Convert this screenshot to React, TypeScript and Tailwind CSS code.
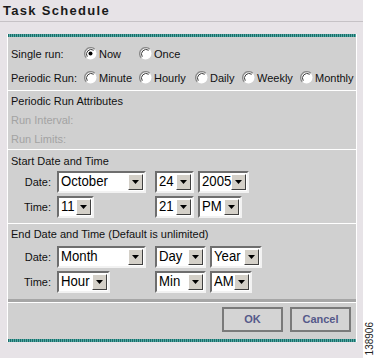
import React from "react";

function Radio({ checked, label, w }: { checked?: boolean; label: string; w?: string }) {
  return (
    <div className={`flex items-center ${w ?? ""}`}>
      <svg width="13" height="13" viewBox="0 0 13 13" className="shrink-0 -mt-[2px]">
        <circle cx="6.5" cy="6.5" r="6" fill="#fff" />
        <path d="M2.26 10.74 A6 6 0 0 1 10.74 2.26" stroke="#8a8a8a" strokeWidth="1.4" fill="none" />
        <path d="M3.3 9.7 A4.6 4.6 0 0 1 9.7 3.3" stroke="#3c3c3c" strokeWidth="1" fill="none" />
        {checked && <circle cx="6.5" cy="6.5" r="2" fill="#000" />}
      </svg>
      <span className="ml-[2px]">{label}</span>
    </div>
  );
}

function Select({ text, w }: { text: string; w: string }) {
  return (
    <div
      className={`${w} h-[22px] bg-white border-2 border-t-[#6e6e6e] border-l-[#6e6e6e] border-b-[#f2f2f2] border-r-[#f2f2f2] flex items-center`}
    >
      <div className="flex-1 min-w-0 pl-[2px] whitespace-nowrap">
        <span className="inline-block origin-left scale-x-[0.85] text-[15.5px] leading-none text-black">{text}</span>
      </div>
      <div className="shrink-0 w-[15px] h-[16px] mr-[1px] bg-[#d4d0c8] border border-t-white border-l-white border-b-[#404040] border-r-[#404040] flex items-center justify-center">
        <svg width="7" height="4" viewBox="0 0 7 4">
          <path d="M0 0h7L3.5 4z" fill="#000" />
        </svg>
      </div>
    </div>
  );
}

function Teal() {
  return <div className="h-[3px] bg-[repeating-linear-gradient(90deg,#1b6d6a_0_1px,#52a9a4_1px_2px)]" />;
}

function Btn({ label }: { label: string }) {
  return (
    <div className="w-[61px] h-[25px] border-2 border-[#7a7a7a] bg-[#d4d4d4] flex items-center justify-center font-bold text-[11px] text-[#55598a]">
      {label}
    </div>
  );
}

export default function App() {
  return (
    <div className="w-[377px] h-[358px] flex bg-white font-['Liberation_Sans',Arial,sans-serif] text-[11px] text-[#111]">
      <div className="w-[363px] h-full bg-[#e7e3e7] flex flex-col">
        <div className="h-[21px] pl-[3px] flex items-center font-bold text-[13px] tracking-[1.3px] text-[#1a1a1a]">
          Task Schedule
        </div>
        <div className="h-px bg-[#c6c2c6]" />
        <div className="h-[12px]" />
        <div className="ml-[7px] w-[350px] border-x border-white bg-[#d0d0d0] flex flex-col">
          <Teal />
          {/* Section 1 */}
          <div className="pt-[5px] pl-[3px]">
            <div className="h-[24px] flex items-center">
              <div className="w-[73px]">Single run:</div>
              <Radio checked label="Now" w="w-[55px]" />
              <Radio label="Once" />
            </div>
            <div className="h-[24px] flex items-center">
              <div className="w-[73px]">Periodic Run:</div>
              <Radio label="Minute" w="w-[55px]" />
              <Radio label="Hourly" w="w-[56px]" />
              <Radio label="Daily" w="w-[47px]" />
              <Radio label="Weekly" w="w-[58px]" />
              <Radio label="Monthly" />
            </div>
          </div>
          <div className="h-px bg-white" />
          {/* Section 2 */}
          <div className="pt-[1px] pl-[3px]">
            <div className="h-[19px] flex items-center">Periodic Run Attributes</div>
            <div className="h-[19px] flex items-center text-[#a3a3a3]">Run Interval:</div>
            <div className="h-[19px] flex items-center text-[#a3a3a3]">Run Limits:</div>
          </div>
          <div className="h-px bg-white" />
          {/* Section 3 */}
          <div className="pt-[1px] pb-[5px] pl-[3px]">
            <div className="h-[20px] flex items-center">Start Date and Time</div>
            <div className="flex items-center">
              <div className="w-[40px] text-right">Date:</div>
              <div className="w-[98px] ml-[6px]">
                <Select text="October" w="w-[89px]" />
              </div>
              <Select text="24" w="w-[39px]" />
              <div className="ml-[4px]">
                <Select text="2005" w="w-[51px]" />
              </div>
            </div>
            <div className="flex items-center mt-[3px]">
              <div className="w-[40px] text-right">Time:</div>
              <div className="w-[98px] ml-[6px]">
                <Select text="11" w="w-[37px]" />
              </div>
              <Select text="21" w="w-[39px]" />
              <div className="ml-[4px]">
                <Select text="PM" w="w-[44px]" />
              </div>
            </div>
          </div>
          <div className="h-px bg-white" />
          {/* Section 4 */}
          <div className="pb-[6px] pl-[3px]">
            <div className="h-[20px] flex items-center">End Date and Time (Default is unlimited)</div>
            <div className="flex items-center mt-[2px]">
              <div className="w-[40px] text-right">Date:</div>
              <div className="w-[98px] ml-[6px]">
                <Select text="Month" w="w-[89px]" />
              </div>
              <Select text="Day" w="w-[51px]" />
              <div className="ml-[4px]">
                <Select text="Year" w="w-[52px]" />
              </div>
            </div>
            <div className="flex items-center mt-[3px]">
              <div className="w-[40px] text-right">Time:</div>
              <div className="w-[98px] ml-[6px]">
                <Select text="Hour" w="w-[53px]" />
              </div>
              <Select text="Min" w="w-[51px]" />
              <div className="ml-[4px]">
                <Select text="AM" w="w-[42px]" />
              </div>
            </div>
          </div>
          <div className="h-[3px] bg-[#a6a6a6]" />
          <div className="h-px bg-white" />
          <div className="pt-[4px] pb-[7px] pr-[5px] flex justify-end gap-[7px]">
            <Btn label="OK" />
            <Btn label="Cancel" />
          </div>
          <Teal />
        </div>
      </div>
      <div className="w-[14px] h-full bg-white flex flex-col justify-end items-center pb-[3px]">
        <span className="[writing-mode:vertical-rl] rotate-180 text-[10px] leading-none text-[#222]">138906</span>
      </div>
    </div>
  );
}
